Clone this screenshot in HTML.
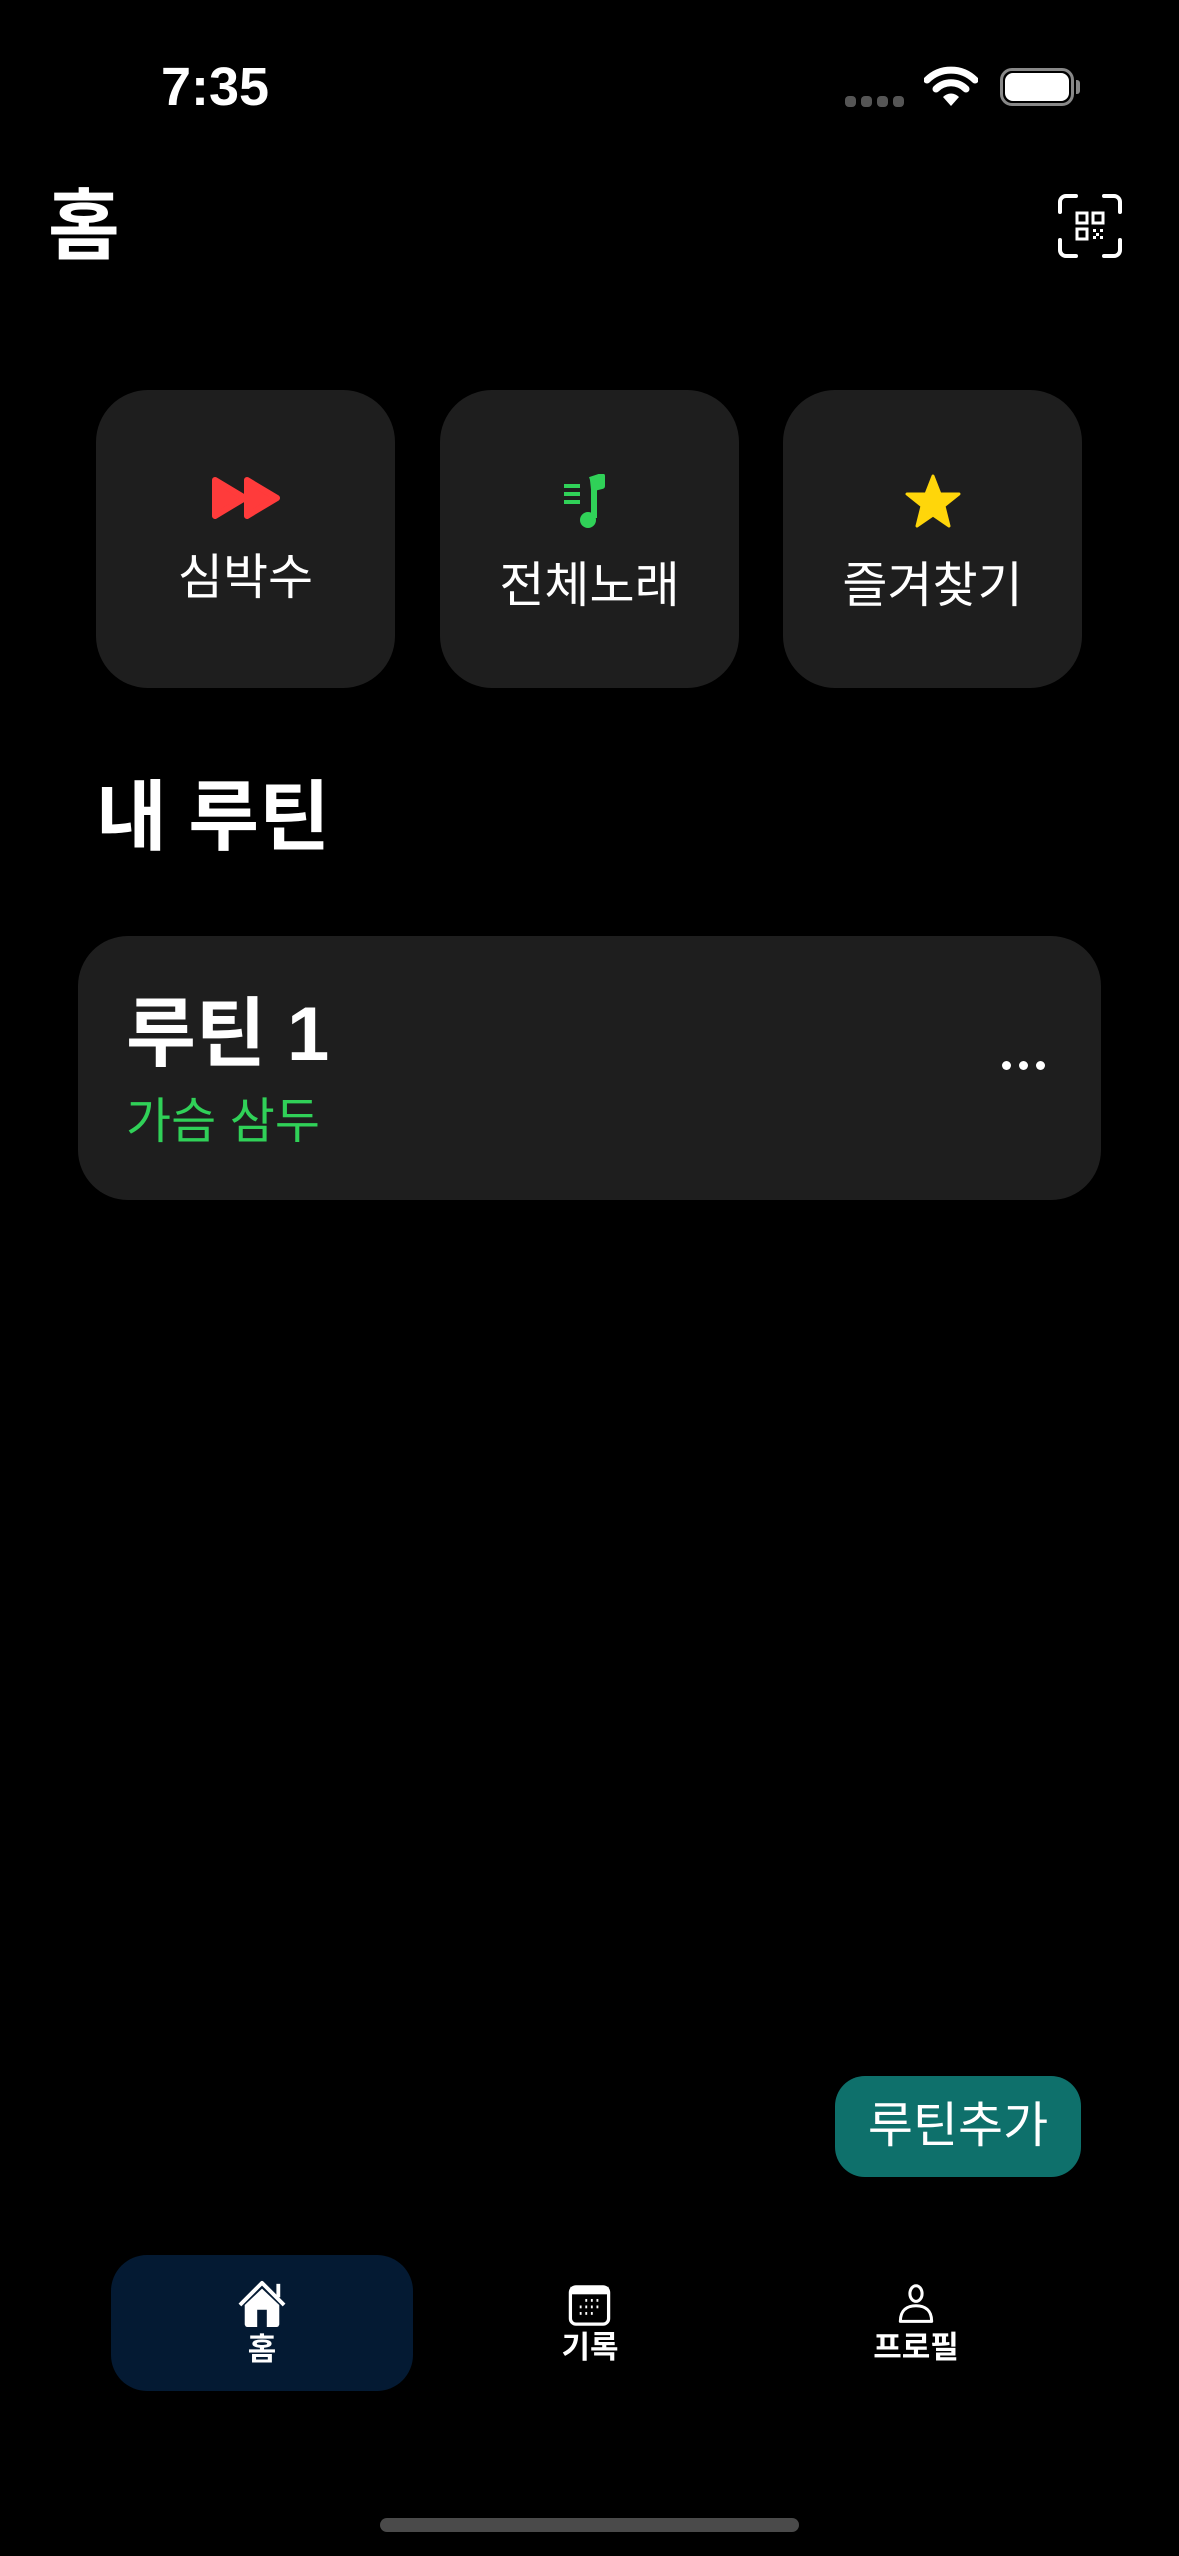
<!DOCTYPE html>
<html><head><meta charset="utf-8"><style>
*{margin:0;padding:0;box-sizing:border-box}
body{width:1179px;height:2556px;background:#000;position:relative;overflow:hidden;font-family:"Liberation Sans","Noto Sans CJK KR",sans-serif;color:#fff}
.abs{position:absolute}
.card{position:absolute;top:390px;width:299px;height:298px;background:#1e1e1e;border-radius:52px}
.lbl{position:absolute;left:0;right:0;top:166px;text-align:center;font-size:49px;line-height:60px}
.ic{position:absolute;left:50%;top:88px;transform:translateX(-50%)}
.tab{position:absolute;text-align:center;font-size:31px;font-weight:bold;line-height:36px}
</style></head><body>
<div class="abs" style="left:161px;top:56px;font-size:54px;font-weight:bold;line-height:62px">7:35</div>
<div class="abs" style="left:845px;top:96px;width:60px;height:11px">
<span class="abs" style="left:0;width:11px;height:11px;border-radius:4px;background:#555"></span>
<span class="abs" style="left:16px;width:11px;height:11px;border-radius:4px;background:#555"></span>
<span class="abs" style="left:32px;width:11px;height:11px;border-radius:4px;background:#555"></span>
<span class="abs" style="left:48px;width:11px;height:11px;border-radius:4px;background:#555"></span>
</div>
<svg class="abs" style="left:924px;top:66px" width="54" height="42" viewBox="0 0 54 42"><path d="M3 14 A34 34 0 0 1 51 14" stroke="#fff" stroke-width="7" fill="none" stroke-linecap="round"/><path d="M12 23 A21 21 0 0 1 42 23" stroke="#fff" stroke-width="7" fill="none" stroke-linecap="round"/><path d="M19 31 L27 40 L35 31 A11 11 0 0 0 19 31Z" fill="#fff"/></svg>
<div class="abs" style="left:1000px;top:68px;width:74px;height:38px;border:3px solid #888;border-radius:12px"></div>
<div class="abs" style="left:1005px;top:73px;width:64px;height:28px;background:#fff;border-radius:8px"></div>
<div class="abs" style="left:1076px;top:80px;width:4px;height:14px;background:#888;border-radius:0 3px 3px 0"></div>

<div class="abs" style="left:48px;top:180px;font-size:78px;font-weight:bold;line-height:92px">홈</div>
<svg class="abs" style="left:1058px;top:194px" width="64" height="64" viewBox="0 0 64 64" fill="none" stroke="#fff" stroke-width="4" stroke-linecap="round"><path d="M2 18V8a6 6 0 0 1 6-6h10M46 2h10a6 6 0 0 1 6 6v10M62 46v10a6 6 0 0 1-6 6H46M18 62H8a6 6 0 0 1-6-6V46"/><g stroke-width="3"><rect x="19" y="19" width="10" height="10"/><rect x="35" y="19" width="10" height="10"/><rect x="19" y="35" width="10" height="10"/></g><g fill="#fff" stroke="none"><rect x="35" y="35" width="3" height="3"/><rect x="42" y="35" width="3" height="3"/><rect x="38" y="39" width="3" height="3"/><rect x="35" y="42" width="3" height="3"/><rect x="42" y="42" width="3" height="3"/></g></svg>

<div class="card" style="left:96px"><svg class="ic" width="70" height="44" viewBox="0 0 70 44" style="top:86px"><path d="M4 4 L34 22 L4 40Z M36 4 L66 22 L36 40Z" fill="#ff3b3b" stroke="#ff3b3b" stroke-width="6" stroke-linejoin="round"/></svg><div class="lbl" style="top:158px">심박수</div></div>
<div class="card" style="left:440px"><svg class="ic" width="56" height="56" viewBox="0 0 56 56" style="top:84px"><path d="M2 12h16M2 20h16M2 28h16" stroke="#30d158" stroke-width="4"/><path d="M28 6 L40 2 V12 L32 14 V44" stroke="#30d158" stroke-width="6" fill="#30d158" stroke-linejoin="round"/><ellipse cx="26" cy="46" rx="8" ry="8" fill="#30d158"/></svg><div class="lbl">전체노래</div></div>
<div class="card" style="left:783px"><svg class="ic" width="60" height="60" viewBox="0 0 60 60" style="top:82px"><path d="M30 4 L37 22 L56 22 L41 34 L46 54 L30 43 L14 54 L19 34 L4 22 L23 22Z" fill="#ffd60a" stroke="#ffd60a" stroke-width="3" stroke-linejoin="round"/></svg><div class="lbl">즐겨찾기</div></div>

<div class="abs" style="left:96px;top:770px;font-size:77px;font-weight:bold;line-height:96px">내 루틴</div>

<div class="abs" style="left:78px;top:936px;width:1023px;height:264px;background:#1e1e1e;border-radius:50px">
<div class="abs" style="left:48px;top:52px;font-size:76px;font-weight:bold;line-height:94px">루틴 1</div>
<div class="abs" style="left:48px;top:156px;font-size:49px;color:#30d158;line-height:60px">가슴 삼두</div>
<div class="abs" style="left:924px;top:125px;width:9px;height:9px;border-radius:50%;background:#fff"></div>
<div class="abs" style="left:941px;top:125px;width:9px;height:9px;border-radius:50%;background:#fff"></div>
<div class="abs" style="left:958px;top:125px;width:9px;height:9px;border-radius:50%;background:#fff"></div>
</div>

<div class="abs" style="left:835px;top:2076px;width:246px;height:101px;background:#0e706b;border-radius:30px;text-align:center;font-size:49px;line-height:101px">루틴추가</div>

<div class="abs" style="left:111px;top:2255px;width:302px;height:136px;background:#041a33;border-radius:36px"></div>
<svg class="abs" style="left:236px;top:2280px" width="52" height="48" viewBox="0 0 54 50"><path d="M4 26 L27 3 L50 26" stroke="#fff" stroke-width="4" fill="none" stroke-linejoin="round"/><path d="M9 26 L27 9 L45 26 V46 a3 3 0 0 1-3 3 H12 a3 3 0 0 1-3-3Z" fill="#fff"/><rect x="22" y="31" width="10" height="18" fill="#041a33"/><rect x="42" y="4" width="4" height="14" fill="#fff"/></svg>
<div class="tab" style="left:212px;top:2332px;width:100px">홈</div>
<svg class="abs" style="left:568px;top:2285px" width="43" height="41" viewBox="0 0 45 44"><rect x="2" y="2" width="41" height="40" rx="6" fill="none" stroke="#fff" stroke-width="3.5"/><rect x="2" y="2" width="41" height="8" fill="#fff"/><g fill="#fff"><rect x="18" y="15" width="2" height="3"/><rect x="24" y="15" width="2" height="3"/><rect x="30" y="15" width="2" height="3"/><rect x="12" y="22" width="2" height="3"/><rect x="18" y="22" width="2" height="3"/><rect x="24" y="22" width="2" height="3"/><rect x="30" y="22" width="2" height="3"/><rect x="12" y="29" width="2" height="3"/><rect x="18" y="29" width="2" height="3"/><rect x="24" y="29" width="2" height="3"/></g></svg>
<div class="tab" style="left:540px;top:2330px;width:100px">기록</div>
<svg class="abs" style="left:896px;top:2284px" width="40" height="40" viewBox="0 0 44 46"><ellipse cx="22" cy="11" rx="7" ry="9" fill="none" stroke="#fff" stroke-width="3.5"/><path d="M4 43 C4 30 12 25 22 25 C32 25 40 30 40 43Z" fill="none" stroke="#fff" stroke-width="3.5" stroke-linejoin="round"/></svg>
<div class="tab" style="left:856px;top:2330px;width:120px">프로필</div>

<div class="abs" style="left:380px;top:2518px;width:419px;height:14px;background:#4a4a4a;border-radius:7px"></div>
</body></html>
